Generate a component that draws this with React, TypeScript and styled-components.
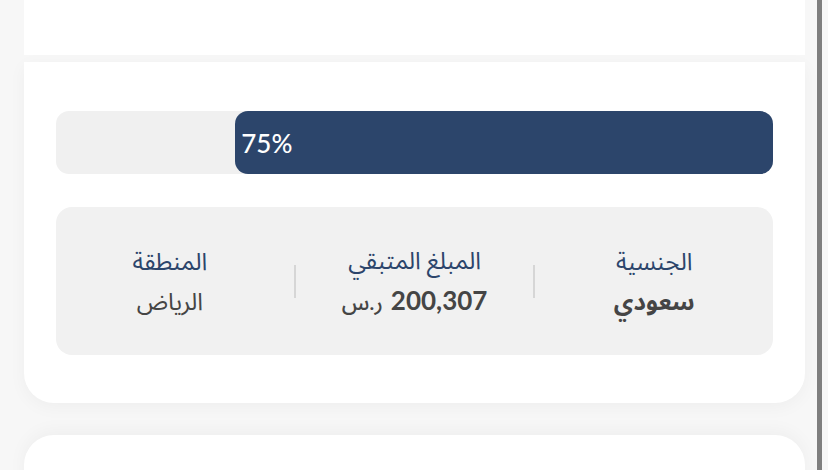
import React from "react";
import styled, { createGlobalStyle } from "styled-components";

const Global = createGlobalStyle`
  html, body { margin: 0; padding: 0; background: #f7f7f7; }
  body { font-family: Lato, "Noto Sans Arabic", "Noto Sans", "DejaVu Sans", sans-serif; overflow: hidden; }
  * { box-sizing: border-box; }
`;

const Page = styled.div`
  position: relative;
  width: 828px;
  height: 470px;
  overflow: hidden;
  padding: 0 23px 0 24px;
  display: flex;
  flex-direction: column;
  background: #f7f7f7;
`;

const TopCard = styled.div`
  height: 55px;
  background: #fff;
  flex-shrink: 0;
`;

const MainCard = styled.div`
  margin-top: 7px;
  background: #fff;
  border-radius: 0 0 30px 30px;
  padding: 49px 32px 48px;
  display: flex;
  flex-direction: column;
  gap: 33px;
  box-shadow: 0 4px 18px rgba(0, 0, 0, 0.04);
  flex-shrink: 0;
`;

const Track = styled.div`
  height: 63px;
  background: #f0f0f0;
  border-radius: 13px;
  display: flex;
  justify-content: flex-end;
`;

const Fill = styled.div`
  height: 100%;
  background: #2c456b;
  border-radius: 13px;
  display: flex;
  align-items: center;
  padding-left: 6px;
  color: #fff;
  font-size: 26px;
  font-weight: 500;
  font-family: Lato, sans-serif;
`;

const InfoBox = styled.div`
  height: 148px;
  background: #f1f1f1;
  border-radius: 16px;
  display: grid;
  grid-template-columns: 1fr auto 1fr auto 1fr;
  align-items: center;
  direction: rtl;
`;

const Col = styled.div<{ $shift?: number }>`
  display: flex;
  flex-direction: column;
  align-items: center;
  gap: 8px;
  transform: translateX(${(p) => p.$shift ?? 0}px);
`;

const Label = styled.div`
  font-size: 24px;
  color: #2c456b;
  line-height: 32px;
`;

const Value = styled.div<{ $w: number }>`
  font-size: 24px;
  color: #454545;
  font-weight: ${(p) => p.$w};
  line-height: 32px;
  display: flex;
  align-items: baseline;
  gap: 8px;
`;

const Num = styled.span`
  font-size: 26px;
  font-weight: 700;
  font-family: Lato, sans-serif;
`;

const Currency = styled.span`
  font-size: 22px;
  font-weight: 500;
`;

const Divider = styled.div`
  width: 2px;
  height: 33px;
  background: #d6d6d6;
`;

const NextCard = styled.div`
  margin-top: 32px;
  height: 80px;
  background: #fff;
  border-radius: 30px 30px 0 0;
  box-shadow: 0 -4px 18px rgba(0, 0, 0, 0.04);
  flex-shrink: 0;
`;

const ScrollGutter = styled.div`
  position: absolute;
  z-index: 5;
  top: 0;
  right: 6px;
  width: 5px;
  height: 470px;
  background: #7f7f7f;
`;

export default function App() {
  return (
    <>
      <Global />
      <Page>
        <TopCard />
        <MainCard>
          <Track>
            <Fill style={{ width: "75%" }}>75%</Fill>
          </Track>
          <InfoBox>
            <Col>
              <Label>الجنسية</Label>
              <Value $w={700}>سعودي</Value>
            </Col>
            <Divider />
            <Col>
              <Label>المبلغ المتبقي</Label>
              <Value $w={400}>
                <Num dir="ltr">200,307</Num>
                <Currency>ر.س</Currency>
              </Value>
            </Col>
            <Divider />
            <Col $shift={-5}>
              <Label>المنطقة</Label>
              <Value $w={400}>الرياض</Value>
            </Col>
          </InfoBox>
        </MainCard>
        <NextCard />
        <ScrollGutter />
      </Page>
    </>
  );
}
